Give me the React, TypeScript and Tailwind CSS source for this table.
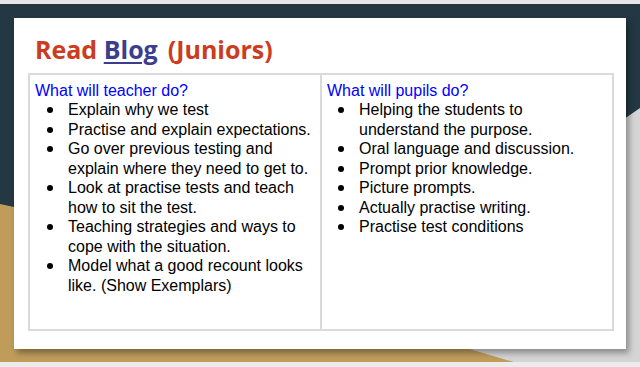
import React from 'react';

const teacher = [
  'Explain why we test',
  'Practise and explain expectations.',
  'Go over previous testing and explain where they need to get to.',
  'Look at practise tests and teach how to sit the test.',
  'Teaching strategies and ways to cope with the situation.',
  'Model what a good recount looks like. (Show Exemplars)',
];

const pupils = [
  'Helping the students to understand the purpose.',
  'Oral language and discussion.',
  'Prompt prior knowledge.',
  'Picture prompts.',
  'Actually practise writing.',
  'Practise test conditions',
];

function Cell({ title, items, textWidth, bulletPad }: { title: string; items: string[]; textWidth: string; bulletPad: string }) {
  return (
    <div className="flex-1 min-w-0 pl-[5px] pt-[7px] text-[16px] leading-[19.5px]" style={{ fontFamily: '"Liberation Sans", Arial, sans-serif' }}>
      <div className="text-[#0000ff] leading-[18px]">{title}</div>
      {items.map((t) => (
        <div key={t} className={`flex ${bulletPad} text-black`}>
          <span className="w-[21px] shrink-0 pt-[7px]">
            <span className="block w-[6px] h-[6px] rounded-full bg-black" />
          </span>
          <span className={textWidth}>{t}</span>
        </div>
      ))}
    </div>
  );
}

export default function App() {
  return (
    <div className="relative w-[640px] h-[367px] overflow-hidden bg-[#d3d3d3]">
      {/* slide theme background */}
      <svg className="absolute inset-0" width="640" height="367" viewBox="0 0 640 367">
        <rect x="0" y="0" width="640" height="367" fill="#d4d4d4" />
        <polygon points="0,4 640,4 640,108 627,117 300,300 0,300" fill="#233843" />
        <polygon points="0,204 14,207 473,350 517,363 0,363" fill="#bf9c5a" />
        <rect x="0" y="0" width="640" height="4" fill="#e6e6e6" />
        <rect x="0" y="362" width="640" height="5" fill="#ececec" />
      </svg>

      <div className="relative ml-[14px] mt-[18px] w-[612px] h-[331px] bg-white shadow-[3px_4px_6px_rgba(0,0,0,0.35)] flex flex-col">
        <h1
          className="ml-[21px] mt-[16px] h-[39px] text-[25px] font-bold leading-[31px] text-[#cc3c1e]"
          style={{ fontFamily: '"Open Sans", Lato, sans-serif' }}
        >
          Read <span className="text-[#3b3d8f] underline decoration-2 underline-offset-[3px]">Blog</span>
          <span className="ml-[10px]">(Juniors)</span>
        </h1>
        <div className="ml-[14px] w-[586px] h-[258px] border-2 border-[#dadada] flex">
          <Cell title="What will teacher do?" items={teacher} textWidth="w-[250px]" bulletPad="pl-[12px]" />
          <div className="w-[2px] bg-[#dadada]" />
          <Cell title="What will pupils do?" items={pupils} textWidth="w-[228px]" bulletPad="pl-[11px]" />
        </div>
      </div>
    </div>
  );
}
